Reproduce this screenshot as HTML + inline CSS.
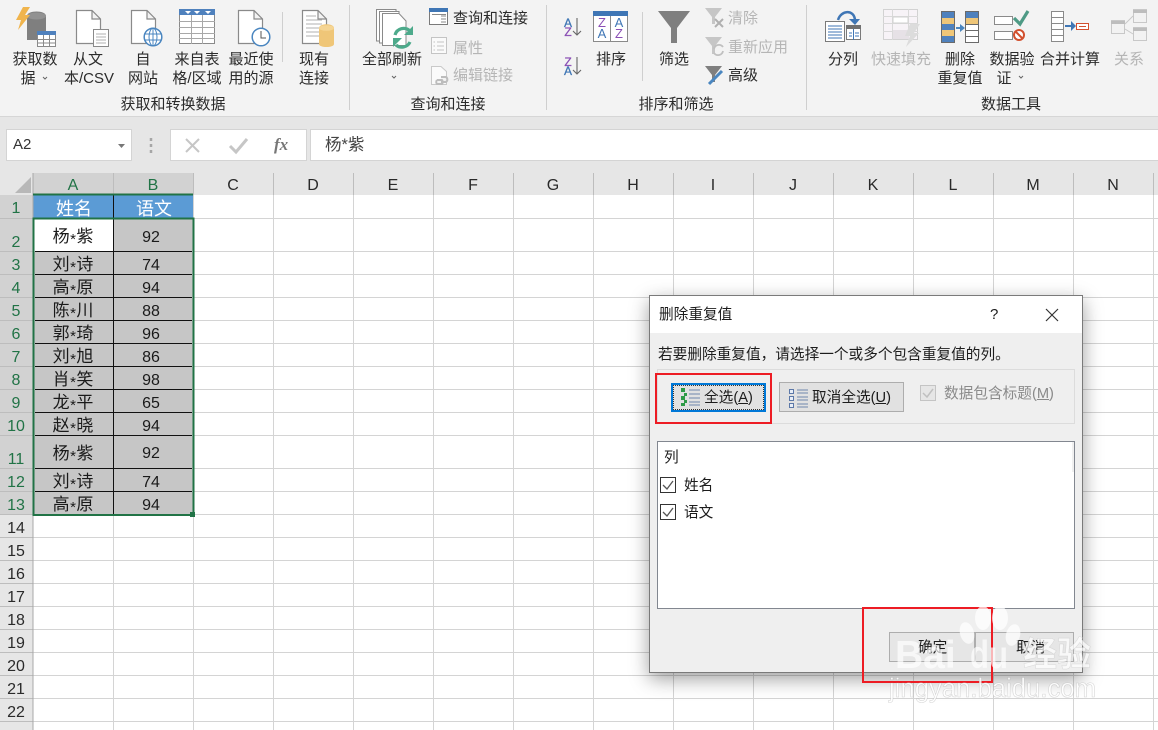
<!DOCTYPE html>
<html lang="zh"><head><meta charset="utf-8"><title>删除重复值</title>
<style>
html,body{margin:0;padding:0;background:#fff}
#p{position:relative;width:1158px;height:730px;overflow:hidden;background:#fff;font-family:"Liberation Sans","Noto Sans CJK SC",sans-serif;color:#262626}
.a{position:absolute}
.t{position:absolute;white-space:nowrap;font-size:15px;line-height:20px;transform:translateX(-50%);color:#2b2b2b;margin-top:1px}
.l{position:absolute;white-space:nowrap;font-size:15px;line-height:20px;color:#2b2b2b;margin-top:1px}
.g{color:#b5b5b5}
.c{position:absolute;white-space:nowrap;font-size:17px;line-height:20px;transform:translateX(-50%);color:#1a1a1a;margin-top:1px}
.s{font-size:15px;position:relative;top:2px;margin:0 .5px}
.n{font-size:16px}
.h{position:absolute;top:176px;line-height:20px;font-size:16px;transform:translateX(-50%);color:#2a2a2a}
.r{position:absolute;left:0;width:32px;text-align:center;font-size:16px;line-height:20px;color:#217346;margin-top:1px}
.k{color:#2a2a2a}
svg{position:absolute;left:0;top:0}
.d{position:absolute;white-space:nowrap;font-size:14.67px;line-height:20px;color:#1c1c1c;margin-top:1px}
</style></head><body><div id="p">

<div class="a" style="left:0;top:0;width:1158px;height:116px;background:#f3f3f3"></div>
<div class="a" style="left:0;top:116px;width:1158px;height:57px;background:#e6e6e6;border-top:1px solid #d6d6d6;box-sizing:border-box"></div>

<svg width="1158" height="117" viewBox="0 0 1158 117">
<g stroke="#cfcfcf" fill="none"><path d="M282.500 12V62M349.500 5V110M546.500 5V110M642.500 12V81M806.500 5V110"/></g>
<!-- get data -->
<path d="M27 16C27 10 46 10 46 16V37H37V40H27Z" fill="#7f7f7f"/><ellipse cx="36.500" cy="16" rx="9.500" ry="3.500" fill="#929292"/>
<path d="M23 7L16 20H21L18 30L30 15H25L30 7Z" fill="#f0b44c"/>
<rect x="37.500" y="31.500" width="18" height="15" fill="#fff" stroke="#8a8a8a"/><rect x="37" y="31" width="19" height="4" fill="#4f81bd"/><path d="M37 39.500H56M37 43H56M43.500 35V47M49.500 35V47" stroke="#8a8a8a" fill="none"/>
<!-- from text -->
<path d="M76.500 10.500H92L100.500 19V43.500H76.500Z M92 10.500V19H100.500" fill="#fff" stroke="#8a8a8a" stroke-width="1.200"/>
<rect x="93.500" y="29.500" width="15" height="17" fill="#fff" stroke="#8a8a8a"/><path d="M96 34H106M96 37H106M96 40H106M96 43H106" stroke="#b0b0b0"/>
<!-- web -->
<path d="M131.500 10.500H147L155.500 19V43.500H131.500Z M147 10.500V19H155.500" fill="#fff" stroke="#8a8a8a" stroke-width="1.200"/>
<circle cx="153" cy="37" r="8.800" fill="#fff" stroke="#4a86c0" stroke-width="1.500"/><ellipse cx="153" cy="37" rx="4" ry="8.800" fill="none" stroke="#4a86c0"/><path d="M144.500 34H161.500M144.500 40H161.500M153 28V46" stroke="#4a86c0" fill="none"/>
<!-- table -->
<rect x="179.500" y="9.500" width="35" height="34" fill="#fff" stroke="#8a8a8a"/><rect x="179" y="9" width="36" height="6" fill="#4f81bd"/>
<path d="M185 11H191L188 14ZM194 11H200L197 14ZM205 11H211L208 14Z" fill="#fff"/>
<path d="M179 21.500H215M179 27.500H215M179 33.500H215M179 38.500H215M191.500 15V44M202.500 15V44" stroke="#a8a8a8" fill="none"/>
<!-- recent -->
<path d="M238.500 10.500H254L262.500 19V43.500H238.500Z M254 10.500V19H262.500" fill="#fff" stroke="#8a8a8a" stroke-width="1.200"/>
<circle cx="261" cy="37" r="8.800" fill="#fff" stroke="#4a86c0" stroke-width="1.500"/><path d="M261 31V38H266" stroke="#555" fill="none"/>
<!-- existing -->
<path d="M302.500 10.500H318L326.500 19V43.500H302.500Z M318 10.500V19H326.500" fill="#fff" stroke="#8a8a8a" stroke-width="1.200"/><path d="M306 16H316M306 20H322M306 24H322M306 28H322M306 32H322M306 36H322" stroke="#b0b0b0"/>
<path d="M319 28C319 23 334 23 334 28V44C334 48 319 48 319 44Z" fill="#efc678"/><ellipse cx="326.500" cy="28" rx="7.500" ry="2.800" fill="#f5d594"/>
<!-- refresh all -->
<g fill="#fff" stroke="#8a8a8a"><path d="M376.500 9.500H396V41H376.500Z"/><path d="M379.500 11.500H399V43H379.500Z"/><path d="M382.500 13.500H399L406 21V45.500H382.500Z"/></g>
<path d="M395 35A9 9 0 0 1 410 31M410 42A9 9 0 0 1 396 45" fill="none" stroke="#4daa8b" stroke-width="3.200"/><path d="M413 26V35H404ZM393 47V38H402Z" fill="#4daa8b"/>
<!-- query -->
<rect x="429.500" y="8.500" width="18" height="16" fill="#fff" stroke="#7a7a7a"/><rect x="429" y="8" width="19" height="4" fill="#3f76b5"/><path d="M441 16H446M441 19H446M441 22H446M432 14.500H446" stroke="#8a8a8a"/>
<!-- props -->
<rect x="431.500" y="37.500" width="15" height="16" fill="#fafafa" stroke="#c4c4c4"/><path d="M437 42H444M437 46H444M437 50H444" stroke="#c4c4c4"/><path d="M433.500 42H435M433.500 46H435M433.500 50H435" stroke="#c4c4c4"/>
<!-- links -->
<path d="M431.500 66.500H441L446.500 71.500V84.500H431.500Z" fill="#fafafa" stroke="#c9c9c9"/>
<path d="M437 80H442A3 3 0 0 1 442 84H437A3 3 0 0 1 437 80M441 77H446A3 3 0 0 1 446 82H441" fill="#f3f3f3" stroke="#bdbdbd" stroke-width="2"/>
<!-- sort az -->
<g font-family="Liberation Sans,sans-serif" font-size="12" text-anchor="middle" stroke-width=".3">
<text x="568" y="27" fill="#3f76b5" stroke="#3f76b5">A</text><text x="568" y="36" fill="#8a4fb5" stroke="#8a4fb5">Z</text>
<text x="568" y="66" fill="#8a4fb5" stroke="#8a4fb5">Z</text><text x="568" y="75" fill="#3f76b5" stroke="#3f76b5">A</text>
</g>
<path d="M577 18V35M573 31L577 35L581 31M577 57V74M573 70L577 74L581 70" fill="none" stroke="#666" stroke-width="1.100"/>
<!-- sort -->
<rect x="593.500" y="11.500" width="34" height="30" fill="#fff" stroke="#8a8a8a"/><rect x="593" y="11" width="35" height="5" fill="#3f76b5"/><path d="M610.500 16V41" stroke="#8a8a8a"/>
<g font-family="Liberation Sans,sans-serif" font-size="13" text-anchor="middle">
<text x="602" y="27" fill="#8a4fb5">Z</text><text x="602" y="38" fill="#3f76b5">A</text><text x="619" y="27" fill="#3f76b5">A</text><text x="619" y="38" fill="#8a4fb5">Z</text>
</g>
<!-- filter -->
<path d="M658 11H690L677 28V43H671V28Z" fill="#7f7f7f"/>
<!-- clear etc -->
<path d="M705 8H722L715 17V24H712V17Z" fill="#c6c6c6"/><path d="M715 19L723 27M723 19L715 27" stroke="#b0b0b0" stroke-width="2"/>
<path d="M705 37H722L715 46V54H712V46Z" fill="#c6c6c6"/><path d="M714 49A5 5 0 0 1 723 47M723 51A5 5 0 0 1 714 53" fill="none" stroke="#c0c0c0" stroke-width="1.800"/>
<path d="M705 66H722L715 75V82H712V75Z" fill="#7f7f7f"/><path d="M709 84L722 71" stroke="#4a86c0" stroke-width="3" fill="none"/>
<!-- split -->
<rect x="825.500" y="21.500" width="19" height="20" fill="#fff" stroke="#7a7a7a"/><path d="M828 26H842M828 29H842M828 32H842M828 35H842M828 38H842" stroke="#3f76b5"/>
<rect x="846.500" y="25.500" width="14" height="14" fill="#fff" stroke="#7a7a7a"/><rect x="846" y="25" width="15" height="4" fill="#707070"/><path d="M849 33H852M855 33H859M849 36H852M855 36H859M853.500 29V40" stroke="#3f76b5"/>
<path d="M838 20C841 10 854 9 855 20" fill="none" stroke="#3f76b5" stroke-width="2.500"/><path d="M849 19H860L855 25Z" fill="#3f76b5"/>
<!-- flash fill -->
<rect x="883.500" y="9.500" width="34" height="30" fill="#f7f3f7" stroke="#d2d2d2"/><path d="M883 16.500H918M883 23.500H918M883 31.500H918M892.500 9V40M908.500 9V40" stroke="#d9d9d9" fill="none"/><rect x="893" y="17" width="15" height="6" fill="#fff" stroke="#d2d2d2"/>
<rect x="893" y="30" width="16" height="9" fill="#e6e1e6"/><path d="M910 24H920L914 33H919L906 47L910 36H905Z" fill="#dcdcdc"/>
<!-- dup -->
<g stroke="#6a6a6a"><rect x="941.500" y="11.500" width="13" height="31" fill="#4f81bd"/><rect x="942" y="18" width="12" height="6" fill="#efc678" stroke="none"/><rect x="942" y="30" width="12" height="6" fill="#efc678" stroke="none"/>
<rect x="965.500" y="11.500" width="13" height="31" fill="#fff"/><rect x="966" y="12" width="12" height="6" fill="#4f81bd" stroke="none"/><rect x="966" y="18" width="12" height="6" fill="#efc678" stroke="none"/><path d="M966 24.500H978M966 30.500H978M966 36.500H978" fill="none"/></g>
<path d="M956 28H961" stroke="#4a86c0" stroke-width="2"/><path d="M960 24L965 28L960 32Z" fill="#4a86c0"/>
<!-- validation -->
<rect x="994.500" y="16.500" width="18" height="8" fill="#fff" stroke="#8a8a8a"/><rect x="994.500" y="31.500" width="18" height="8" fill="#fff" stroke="#8a8a8a"/>
<path d="M1014 18L1020 24L1028 11" fill="none" stroke="#4e9a85" stroke-width="3.200"/>
<circle cx="1019" cy="35" r="5" fill="#fff" stroke="#d2502f" stroke-width="2"/><path d="M1016 32L1022 38" stroke="#d2502f" stroke-width="2"/>
<!-- consolidate -->
<rect x="1051.500" y="11.500" width="12" height="30" fill="#fff" stroke="#8a8a8a"/><path d="M1051 17.500H1064M1051 23.500H1064M1051 29.500H1064M1051 35.500H1064" stroke="#8a8a8a"/>
<path d="M1065 26H1072" stroke="#3f76b5" stroke-width="2"/><path d="M1071 21L1076 26L1071 31Z" fill="#3f76b5"/>
<rect x="1076.500" y="23.500" width="12" height="6" fill="#fff" stroke="#d2502f"/><path d="M1079 26.500H1086" stroke="#d2502f"/>
<!-- relations -->
<g fill="#f2f2f2" stroke="#c8c8c8"><rect x="1111.500" y="20.500" width="13" height="13"/><rect x="1133.500" y="9.500" width="13" height="13"/><rect x="1133.500" y="27.500" width="13" height="13"/></g>
<path d="M1111 21H1125V24H1111ZM1133 10H1147V13H1133ZM1133 28H1147V31H1133Z" fill="#bdbdbd"/><path d="M1125 24L1133 16M1125 29L1133 34" stroke="#c8c8c8" fill="none"/>
<!-- chevrons -->
<g fill="none" stroke="#666"><path d="M43 77L45 79L47 77M392 76L394 78L396 76M1019 76L1021 78L1023 76"/></g>
</svg>

<div class="t" style="left:35px;top:49px">获取数</div><div class="t" style="left:28px;top:68px">据</div>
<div class="t" style="left:88px;top:49px">从文</div><div class="t" style="left:89px;top:68px">本/CSV</div>
<div class="t" style="left:143px;top:49px">自</div><div class="t" style="left:143px;top:68px">网站</div>
<div class="t" style="left:197px;top:49px">来自表</div><div class="t" style="left:197px;top:68px">格/区域</div>
<div class="t" style="left:251px;top:49px">最近使</div><div class="t" style="left:251px;top:68px">用的源</div>
<div class="t" style="left:314px;top:49px">现有</div><div class="t" style="left:314px;top:68px">连接</div>
<div class="t" style="left:173px;top:94px">获取和转换数据</div>
<div class="t" style="left:392px;top:49px">全部刷新</div>
<div class="l" style="left:453px;top:8px">查询和连接</div>
<div class="l g" style="left:453px;top:38px">属性</div>
<div class="l g" style="left:453px;top:65px">编辑链接</div>
<div class="t" style="left:448px;top:94px">查询和连接</div>
<div class="t" style="left:611px;top:49px">排序</div>
<div class="t" style="left:674px;top:49px">筛选</div>
<div class="l g" style="left:728px;top:8px">清除</div>
<div class="l g" style="left:728px;top:37px">重新应用</div>
<div class="l" style="left:728px;top:65px">高级</div>
<div class="t" style="left:676px;top:94px">排序和筛选</div>
<div class="t" style="left:843px;top:49px">分列</div>
<div class="t g" style="left:901px;top:49px">快速填充</div>
<div class="t" style="left:960px;top:49px">删除</div><div class="t" style="left:960px;top:68px">重复值</div>
<div class="t" style="left:1012px;top:49px">数据验</div><div class="t" style="left:1004px;top:68px">证</div>
<div class="t" style="left:1070px;top:49px">合并计算</div>
<div class="t g" style="left:1129px;top:49px">关系</div>
<div class="t" style="left:1011px;top:94px">数据工具</div>

<!-- formula bar -->
<div class="a" style="left:6px;top:129px;width:126px;height:32px;background:#fff;border:1px solid #d4d4d4;box-sizing:border-box"></div>
<div class="l" style="left:13px;top:134px;font-size:15px;color:#333">A2</div>
<div class="a" style="left:170px;top:129px;width:137px;height:32px;background:#fff;border:1px solid #d4d4d4;box-sizing:border-box"></div>
<div class="a" style="left:310px;top:129px;width:850px;height:32px;background:#fff;border:1px solid #d4d4d4;box-sizing:border-box"></div>
<svg width="1158" height="173" viewBox="0 0 1158 173">
<path d="M118 144H125L121.500 148Z" fill="#777"/>
<path d="M151 138V141M151 144V147M151 150V153" stroke="#a6a6a6" stroke-width="2.500"/>
<path d="M186 139L199 152M199 139L186 152" stroke="#c6c6c6" stroke-width="2"/>
<path d="M230 146L236 152L247 139" fill="none" stroke="#c6c6c6" stroke-width="3"/>
</svg>
<div class="l" style="left:274px;top:134px;font-family:'Liberation Serif',serif;font-style:italic;font-weight:bold;font-size:17px;color:#777">fx</div>
<div class="l" style="left:325px;top:134px;font-size:16.500px;color:#444">杨*紫</div>

<!-- grid -->
<div class="a" style="left:0;top:173px;width:1158px;height:22px;background:#e6e6e6"></div>
<div class="a" style="left:33px;top:173px;width:160px;height:22px;background:#d2d2d2"></div>
<div class="a" style="left:0;top:195px;width:33px;height:535px;background:#e6e6e6"></div>
<div class="a" style="left:0;top:195px;width:33px;height:320px;background:#d2d2d2"></div>
<div class="a" style="left:33px;top:195px;width:160px;height:23px;background:#5b9bd5"></div>
<div class="a" style="left:33px;top:218px;width:160px;height:297px;background:#c6c6c6"></div>
<div class="a" style="left:33px;top:218px;width:80px;height:34px;background:#fff"></div>
<svg width="1158" height="730" viewBox="0 0 1158 730">
<g stroke="#d4d4d4" fill="none">
<path d="M193.500 195V730M273.500 195V730M353.500 195V730M433.500 195V730M513.500 195V730M593.500 195V730M673.500 195V730M753.500 195V730M833.500 195V730M913.500 195V730M993.500 195V730M1073.500 195V730M1153.500 195V730M113.500 515V730"/>
<path d="M33 218.500H1158M33 251.500H1158M33 274.500H1158M33 297.500H1158M33 320.500H1158M33 343.500H1158M33 366.500H1158M33 389.500H1158M33 412.500H1158M33 435.500H1158M33 468.500H1158M33 491.500H1158M33 514.500H1158M33 537.500H1158M33 560.500H1158M33 583.500H1158M33 606.500H1158M33 629.500H1158M33 652.500H1158M33 675.500H1158M33 698.500H1158M33 721.500H1158"/>
</g>
<g stroke="#bdbdbd" fill="none">
<path d="M113.500 173V195M193.500 173V195M273.500 173V195M353.500 173V195M433.500 173V195M513.500 173V195M593.500 173V195M673.500 173V195M753.500 173V195M833.500 173V195M913.500 173V195M993.500 173V195M1073.500 173V195M1153.500 173V195"/>
<path d="M0 218.500H33M0 251.500H33M0 274.500H33M0 297.500H33M0 320.500H33M0 343.500H33M0 366.500H33M0 389.500H33M0 412.500H33M0 435.500H33M0 468.500H33M0 491.500H33M0 514.500H33M0 537.500H33M0 560.500H33M0 583.500H33M0 606.500H33M0 629.500H33M0 652.500H33M0 675.500H33M0 698.500H33M0 721.500H33"/>
<path d="M33 173V730" stroke="#a8a8a8"/>
</g>
<path d="M15 193L31 177V193Z" fill="#b8b8b8"/>
<g stroke="#111" fill="none">
<path d="M35 251.500H192M35 274.500H192M35 297.500H192M35 320.500H192M35 343.500H192M35 366.500H192M35 389.500H192M35 412.500H192M35 435.500H192M35 468.500H192M35 491.500H192"/>
<path d="M113.500 195V515"/>
</g>
<path d="M33 194.500H193" stroke="#217346" stroke-width="2"/>
<rect x="33.500" y="218.500" width="160" height="296.500" fill="none" stroke="#217346" stroke-width="2"/>
<rect x="190" y="512" width="5" height="5" fill="#217346"/>
</svg>

<div class="h" style="left:73px;color:#217346">A</div><div class="h" style="left:153px;color:#217346">B</div>
<div class="h" style="left:233px">C</div><div class="h" style="left:313px">D</div><div class="h" style="left:393px">E</div><div class="h" style="left:473px">F</div><div class="h" style="left:553px">G</div><div class="h" style="left:633px">H</div><div class="h" style="left:713px">I</div><div class="h" style="left:793px">J</div><div class="h" style="left:873px">K</div><div class="h" style="left:953px">L</div><div class="h" style="left:1033px">M</div><div class="h" style="left:1113px">N</div>

<div class="r" style="top:198px">1</div><div class="r" style="top:232px">2</div><div class="r" style="top:255px">3</div><div class="r" style="top:278px">4</div><div class="r" style="top:301px">5</div><div class="r" style="top:324px">6</div><div class="r" style="top:347px">7</div><div class="r" style="top:370px">8</div><div class="r" style="top:393px">9</div><div class="r" style="top:416px">10</div><div class="r" style="top:449px">11</div><div class="r" style="top:472px">12</div><div class="r" style="top:495px">13</div>
<div class="r k" style="top:518px">14</div><div class="r k" style="top:541px">15</div><div class="r k" style="top:564px">16</div><div class="r k" style="top:587px">17</div><div class="r k" style="top:610px">18</div><div class="r k" style="top:633px">19</div><div class="r k" style="top:656px">20</div><div class="r k" style="top:679px">21</div><div class="r k" style="top:702px">22</div>

<div class="c" style="left:74px;top:198px;color:#fff;font-size:18px">姓名</div><div class="c" style="left:154px;top:198px;color:#fff;font-size:18px">语文</div>
<div class="c" style="left:73px;top:226px">杨<span class="s">*</span>紫</div><div class="c n" style="left:151px;top:227px">92</div>
<div class="c" style="left:73px;top:254px">刘<span class="s">*</span>诗</div><div class="c n" style="left:151px;top:255px">74</div>
<div class="c" style="left:73px;top:277px">高<span class="s">*</span>原</div><div class="c n" style="left:151px;top:278px">94</div>
<div class="c" style="left:73px;top:300px">陈<span class="s">*</span>川</div><div class="c n" style="left:151px;top:301px">88</div>
<div class="c" style="left:73px;top:323px">郭<span class="s">*</span>琦</div><div class="c n" style="left:151px;top:324px">96</div>
<div class="c" style="left:73px;top:346px">刘<span class="s">*</span>旭</div><div class="c n" style="left:151px;top:347px">86</div>
<div class="c" style="left:73px;top:369px">肖<span class="s">*</span>笑</div><div class="c n" style="left:151px;top:370px">98</div>
<div class="c" style="left:73px;top:392px">龙<span class="s">*</span>平</div><div class="c n" style="left:151px;top:393px">65</div>
<div class="c" style="left:73px;top:415px">赵<span class="s">*</span>晓</div><div class="c n" style="left:151px;top:416px">94</div>
<div class="c" style="left:73px;top:443px">杨<span class="s">*</span>紫</div><div class="c n" style="left:151px;top:443px">92</div>
<div class="c" style="left:73px;top:471px">刘<span class="s">*</span>诗</div><div class="c n" style="left:151px;top:472px">74</div>
<div class="c" style="left:73px;top:494px">高<span class="s">*</span>原</div><div class="c n" style="left:151px;top:495px">94</div>

<!-- dialog -->
<div class="a" style="left:649px;top:295px;width:434px;height:378px;background:#efefef;border:1px solid #7a7a7a;box-sizing:border-box;box-shadow:0 6px 18px rgba(0,0,0,.38)"></div>
<div class="a" style="left:650px;top:296px;width:432px;height:37px;background:#fff"></div>
<div class="d" style="left:659px;top:304px">删除重复值</div>
<div class="d" style="left:990px;top:304px;font-size:15px">?</div>
<svg width="1158" height="730" viewBox="0 0 1158 730"><path d="M1046 309L1058 321M1058 309L1046 321" stroke="#333" stroke-width="1.200"/></svg>
<div class="d" style="left:658px;top:344px">若要删除重复值，请选择一个或多个包含重复值的列。</div>
<div class="a" style="left:657px;top:369px;width:418px;height:55px;border:1px solid #dcdcdc;box-sizing:border-box"></div>

<div class="a" style="left:671px;top:383px;width:95px;height:29px;background:#e1e1e1;border:2px solid #0078d7;box-sizing:border-box"></div>
<div class="a" style="left:673px;top:385px;width:91px;height:25px;border:1px dotted #333;box-sizing:border-box"></div>
<div class="d" style="left:704px;top:387px">全选(<u>A</u>)</div>
<div class="a" style="left:779px;top:382px;width:125px;height:30px;background:#e1e1e1;border:1px solid #adadad;box-sizing:border-box"></div>
<div class="d" style="left:812px;top:387px">取消全选(<u>U</u>)</div>
<svg width="1158" height="730" viewBox="0 0 1158 730">
<g fill="#2e9a46"><rect x="681" y="388" width="4" height="4"/><rect x="684" y="393" width="3" height="3"/><rect x="681" y="396" width="4" height="4"/><rect x="684" y="400" width="3" height="3"/><rect x="681" y="403" width="4" height="3"/></g>
<path d="M689 390H700M689 394H700M689 398H700M689 402H700M689 405H700" stroke="#6f86ad"/>
<g fill="#e8eef7" stroke="#5c78a8"><rect x="789.500" y="389.500" width="4" height="4"/><rect x="789.500" y="396.500" width="4" height="4"/><rect x="789.500" y="403.500" width="4" height="4"/></g>
<path d="M797 390H808M797 393H808M797 397H808M797 400H808M797 404H808M797 407H808" stroke="#6f86ad"/>
<rect x="920.500" y="385.500" width="15" height="15" fill="#e6e6e6" stroke="#c4c4c4"/><path d="M923 393L927 397L933 389" fill="none" stroke="#c0c0c0" stroke-width="1.500"/>
</svg>
<div class="d" style="left:944px;top:383px;color:#8a8a8a">数据包含标题(<u>M</u>)</div>
<div class="a" style="left:655px;top:373px;width:117px;height:51px;border:2px solid #ed1c24;box-sizing:border-box"></div>

<div class="a" style="left:657px;top:441px;width:418px;height:168px;background:#fff;border:1px solid #828790;box-sizing:border-box"></div>
<div class="a" style="left:1072px;top:442px;width:2px;height:30px;background:#f0f0f0"></div>
<div class="d" style="left:664px;top:447px">列</div>
<svg width="1158" height="730" viewBox="0 0 1158 730">
<rect x="660.500" y="477.500" width="15" height="15" fill="#fff" stroke="#333"/><path d="M663 485L667 489L673 481" fill="none" stroke="#555" stroke-width="1.300"/>
<rect x="660.500" y="504.500" width="15" height="15" fill="#fff" stroke="#333"/><path d="M663 512L667 516L673 508" fill="none" stroke="#555" stroke-width="1.300"/>
</svg>
<div class="d" style="left:684px;top:475px">姓名</div>
<div class="d" style="left:684px;top:502px">语文</div>

<div class="a" style="left:889px;top:632px;width:86px;height:30px;background:#e6e6e6;border:1px solid #adadad;box-sizing:border-box"></div>
<div class="a" style="left:975px;top:632px;width:99px;height:30px;background:#e6e6e6;border:1px solid #adadad;box-sizing:border-box"></div>
<div class="d" style="left:918px;top:637px">确定</div>
<div class="d" style="left:1016px;top:637px">取消</div>
<div class="a" style="left:862px;top:607px;width:131px;height:76px;border:2px solid #ed1c24;box-sizing:border-box"></div>

<!-- watermark -->
<svg width="1158" height="730" viewBox="0 0 1158 730">
<g fill="#fff" fill-opacity=".72">
<ellipse cx="967" cy="633" rx="7" ry="11" transform="rotate(-15 967 633)"/><ellipse cx="983" cy="618" rx="8" ry="12"/><ellipse cx="1000" cy="618" rx="8" ry="12"/><ellipse cx="1013" cy="635" rx="7" ry="11" transform="rotate(15 1013 635)"/>
</g>
<g font-family="Liberation Sans,sans-serif" font-weight="bold" font-size="39" fill="#fff" fill-opacity=".68">
<text x="895" y="668">Bai</text><text x="970" y="668" textLength="38" lengthAdjust="spacingAndGlyphs">du</text>
</g>
<text x="1023" y="666" font-family="Liberation Sans,Noto Sans CJK SC,sans-serif" font-weight="bold" font-size="34" fill="#fff" fill-opacity=".7" stroke="#999" stroke-opacity=".3" stroke-width=".5">经验</text>
<text x="889" y="697" font-family="Liberation Sans,sans-serif" font-size="27" textLength="207" lengthAdjust="spacingAndGlyphs" fill="#fff" fill-opacity=".85" stroke="#999" stroke-opacity=".4" stroke-width=".6">jingyan.baidu.com</text>
</svg>
</div></body></html>
